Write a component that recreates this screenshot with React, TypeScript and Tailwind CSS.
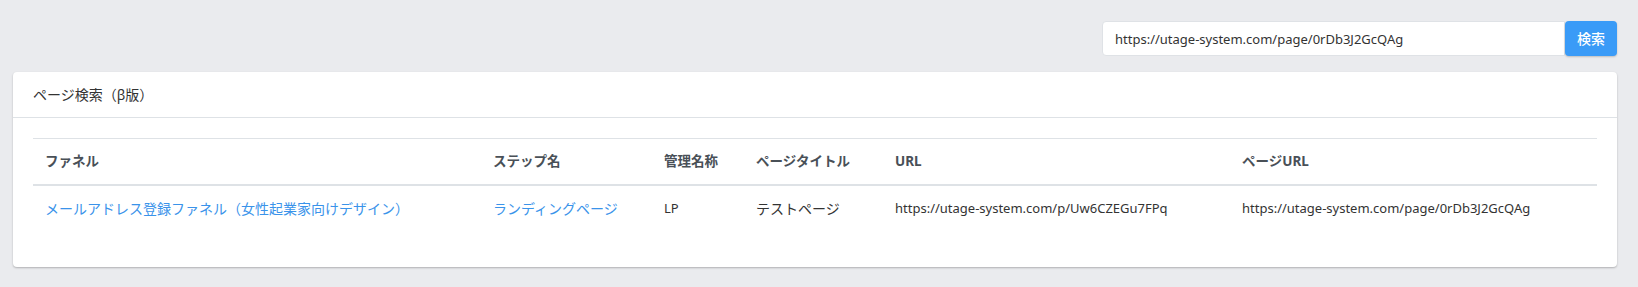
import React from "react";

const cols = [448, 171, 92, 139, 347, 367];

export default function App() {
  return (
    <div className="min-h-[287px] bg-[#eaebee] pt-[21px] pl-[13px] pr-[21px] font-['Noto_Sans','Noto_Sans_CJK_JP',sans-serif] text-[#333]">
      <div className="flex justify-end mb-[16px]">
        <div className="flex h-[35px] w-[515px]">
          <input
            readOnly
            value="https://utage-system.com/page/0rDb3J2GcQAg"
            className="flex-1 min-w-0 h-full bg-white border border-[#dfe2e6] rounded-l-[4px] px-[12px] text-[13px] text-[#333] outline-none"
          />
          <button className="w-[52px] h-full bg-[#3a9bf7] text-white rounded-[4px] text-[14px] font-medium shadow-[0_1px_2px_rgba(0,0,0,0.2)]">
            検索
          </button>
        </div>
      </div>
      <div className="bg-white rounded-[4px] shadow-[0_1px_2px_rgba(0,0,0,0.25)]">
        <div className="h-[46px] px-[20px] flex items-center border-b border-[#dee2e6] text-[14px] text-[#333]">
          ページ検索（β版）
        </div>
        <div className="p-[20px]">
          <table className="w-full table-fixed border-collapse mb-[16px] text-[13px]">
            <colgroup>
              {cols.map((w, i) => (
                <col key={i} style={{ width: w }} />
              ))}
            </colgroup>
            <thead>
              <tr className="border-t border-[#dee2e6] border-b-2 border-b-[#dee2e6]">
                {["ファネル", "ステップ名", "管理名称", "ページタイトル", "URL", "ページURL"].map((h) => (
                  <th key={h} className="px-[12px] py-[12px] leading-[21px] text-left font-bold text-[#495057] text-[13.5px]">
                    {h}
                  </th>
                ))}
              </tr>
            </thead>
            <tbody>
              <tr>
                <td className="px-[12px] py-[12px] leading-[21px] text-[#3a93ea] text-[14px]">
                  メールアドレス登録ファネル（女性起業家向けデザイン）
                </td>
                <td className="px-[12px] py-[12px] leading-[21px] text-[#3a93ea] text-[14px]">ランディングページ</td>
                <td className="px-[12px] py-[12px] leading-[21px] text-[#333] text-[13px]">LP</td>
                <td className="px-[12px] py-[12px] leading-[21px] text-[#333] text-[14px]">テストページ</td>
                <td className="px-[12px] py-[12px] leading-[21px] text-[#333] text-[13px]">
                  https://utage-system.com/p/Uw6CZEGu7FPq
                </td>
                <td className="px-[12px] py-[12px] leading-[21px] text-[#333] text-[13px]">
                  https://utage-system.com/page/0rDb3J2GcQAg
                </td>
              </tr>
            </tbody>
          </table>
        </div>
      </div>
    </div>
  );
}
